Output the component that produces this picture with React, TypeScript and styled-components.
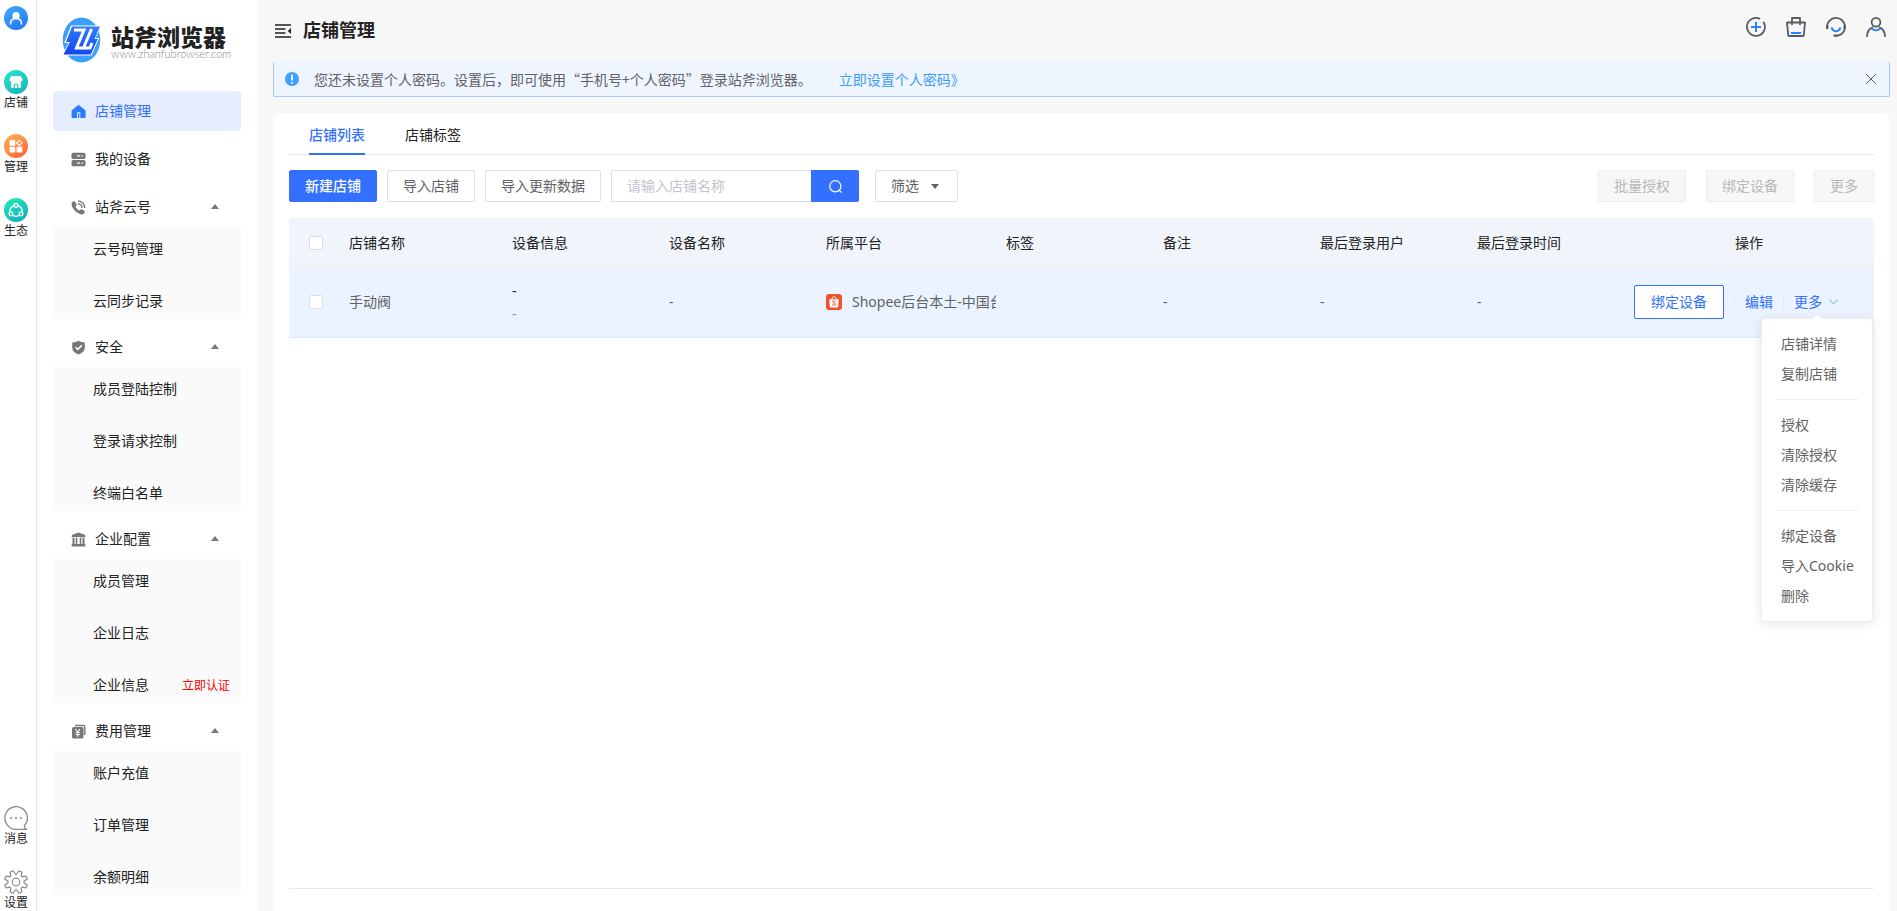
import React from "react";
import styled, { createGlobalStyle, css } from "styled-components";

const GlobalStyle = createGlobalStyle`
  *, *::before, *::after { box-sizing: border-box; }
  body {
    margin: 0;
    background: #f7f7f7;
    color: #222;
    font-family: "Noto Sans", "Noto Sans CJK SC", sans-serif;
    font-size: 14px;
    line-height: 20px;
  }
  button, input { font: inherit; color: inherit; }
  button { padding: 0; border: 0; background: none; cursor: pointer; white-space: nowrap; }
  a { color: inherit; text-decoration: none; }
  ul { list-style: none; margin: 0; padding: 0; }
  h1, p { margin: 0; }
  svg { display: block; flex: none; }
`;

const Shell = styled.div`
  display: flex;
  min-height: 100vh;
`;

/* ---------- Rail ---------- */
const Rail = styled.nav`
  flex: none;
  display: flex;
  flex-direction: column;
  justify-content: space-between;
  width: 37px;
  padding: 6px 4px 0;
  background: #fff;
  border-right: 1px solid #e2e2e2;
`;

const RailGroup = styled.div`
  display: flex;
  flex-direction: column;
`;

const RailItem = styled.a<{ $last?: boolean }>`
  display: flex;
  flex-direction: column;
  width: 24px;
  height: ${(p) => (p.$last ? "41px" : "64px")};
  font-size: 12px;
  line-height: 18px;
  white-space: nowrap;
`;

/* ---------- Sidebar ---------- */
const Sidebar = styled.aside`
  flex: none;
  width: 220px;
  padding: 16px 16px 0;
  background: #fff;
`;

const Brand = styled.a`
  display: flex;
  align-items: center;
  gap: 10px;
  height: 47px;
  margin-bottom: 28px;
  padding-left: 9px;
`;

const BrandText = styled.span`
  display: flex;
  flex-direction: column;
  padding-top: 4px;
`;

const BrandName = styled.span`
  font-family: "Noto Sans CJK SC", sans-serif;
  font-size: 23px;
  font-weight: 900;
  line-height: 24px;
  color: #222;
  white-space: nowrap;
`;

const BrandUrl = styled.span`
  font-family: Lato, sans-serif;
  font-size: 11px;
  font-weight: 300;
  line-height: 12px;
  color: #8a8a8a;
`;

const Menu = styled.ul`
  display: flex;
  flex-direction: column;
  gap: 8px;
`;

const MenuLink = styled.a<{ $active?: boolean }>`
  display: flex;
  align-items: center;
  gap: 9px;
  height: 40px;
  padding: 0 22px 0 18px;
  border-radius: 4px;
  color: #777;
  ${(p) =>
    p.$active &&
    css`
      color: #2b7cfd;
      background: #e6edff;
    `}
`;

const MenuLabel = styled.span<{ $active?: boolean }>`
  flex: 1;
  color: ${(p) => (p.$active ? "#3370ff" : "#222")};
`;

const CaretUp = styled.span`
  width: 0;
  height: 0;
  margin-bottom: 2px;
  border: 4px solid transparent;
  border-top: 0;
  border-bottom: 5px solid #777;
`;

const SubMenu = styled.ul`
  display: flex;
  flex-direction: column;
  gap: 16px;
  padding-top: 4px;
  background: #fafafa;
`;

const SubLink = styled.a`
  display: flex;
  align-items: center;
  justify-content: space-between;
  height: 36px;
  padding: 0 11px 0 40px;
`;

const Tag = styled.span`
  padding-top: 2px;
  font-size: 12px;
  line-height: 18px;
  color: #f00;
`;

/* ---------- Main ---------- */
const Main = styled.main`
  flex: 1;
  min-width: 0;
  display: flex;
  flex-direction: column;
  padding: 0 7px 0 16px;
`;

const TopBar = styled.header`
  display: flex;
  align-items: center;
  gap: 12px;
  height: 62px;
  padding-left: 2px;
`;

const Title = styled.h1`
  flex: 1;
  padding-bottom: 2px;
  font-size: 18px;
  font-weight: 700;
  line-height: 26px;
`;

const TopActions = styled.div`
  display: flex;
  gap: 20px;
  margin: 0 4px 8px 0;
`;

const Notice = styled.div`
  display: flex;
  align-items: center;
  height: 35px;
  padding: 0 13px 0 11px;
  font-family: "Noto Sans CJK SC", sans-serif;
  color: #606266;
  background: #eef5ff;
  border: 1px solid #a6c8ff;
  border-top: 0;
  border-radius: 0 0 2px 2px;
`;

const NoticeText = styled.p`
  margin-left: 15px;
`;

const NoticeLink = styled.a`
  margin: 0 auto 0 27px;
  color: #3d9bfd;
`;

const Card = styled.section`
  flex: 1;
  display: flex;
  flex-direction: column;
  margin-top: 16px;
  padding: 0 16px;
  background: #fff;
  border-radius: 8px 8px 0 0;
`;

const Tabs = styled.div`
  display: flex;
  gap: 40px;
  padding-left: 20px;
  border-bottom: 1px solid #e4e7ed;
`;

const Tab = styled.button<{ $active?: boolean }>`
  height: 42px;
  margin-bottom: -1px;
  padding-top: 4px;
  border-bottom: 2px solid transparent;
  ${(p) =>
    p.$active &&
    css`
      color: #3370ff;
      font-weight: 500;
      border-color: #3370ff;
    `}
`;

const Toolbar = styled.div`
  display: flex;
  gap: 10px;
  margin: 15px 0 16px;
`;

const Button = styled.button<{ $primary?: boolean }>`
  height: 32px;
  padding: 0 15px;
  color: #606266;
  background: #fff;
  border: 1px solid #dcdfe6;
  border-radius: 2px;
  &:disabled {
    color: #b8b8b8;
    background: #f7f7f7;
    border-color: #ebeef5;
  }
  ${(p) =>
    p.$primary &&
    css`
      color: #fff;
      font-weight: 500;
      background: #3370ff;
      border-color: #3370ff;
    `}
`;

const Search = styled.form`
  display: flex;
  margin-right: 6px;
`;

const SearchInput = styled.input`
  width: 200px;
  height: 32px;
  padding: 0 15px 2px;
  background: #fff;
  border: 1px solid #dcdfe6;
  border-right: 0;
  border-radius: 2px 0 0 2px;
  outline: 0;
  &::placeholder { color: #c0c4cc; opacity: 1; }
`;

const SearchButton = styled.button`
  display: flex;
  align-items: center;
  justify-content: center;
  width: 48px;
  height: 32px;
  background: #3370ff;
  border-radius: 0 2px 2px 0;
`;

const FilterButton = styled(Button)`
  display: flex;
  align-items: center;
  gap: 12px;
  padding-right: 18px;
`;

const CaretDown = styled.span`
  border: 4px solid transparent;
  border-top: 5px solid #606266;
  border-bottom: 0;
`;

const BulkActions = styled.div`
  display: flex;
  gap: 20px;
  margin-left: auto;
`;

const Table = styled.table`
  width: 100%;
  table-layout: fixed;
  border-collapse: separate;
  border-spacing: 0;
`;

const Col = styled.col<{ $w?: number }>`
  width: ${(p) => (p.$w ? `${p.$w}px` : "auto")};
`;

const Th = styled.th<{ $center?: boolean }>`
  height: 49px;
  padding: 2px 10px 0;
  font-weight: 400;
  text-align: ${(p) => (p.$center ? "center" : "left")};
  background: #f1f5fb;
  border-bottom: 1px solid #ebeef5;
  &:first-child { padding-left: 20px; }
`;

const Td = styled.td`
  height: 71px;
  padding: 0 0 0 10px;
  color: #606266;
  background: #eaf3ff;
  border-bottom: 1px solid #e4eaf5;
  &:first-child { padding-left: 20px; }
`;

const Checkbox = styled.input`
  appearance: none;
  display: block;
  width: 14px;
  height: 14px;
  margin: 0;
  background: #fff;
  border: 1px solid #dcdfe6;
  border-radius: 2px;
`;

const DeviceLine = styled.div<{ $dark?: boolean }>`
  line-height: 23px;
  color: ${(p) => (p.$dark ? "#222" : "#8b8f96")};
`;

const Platform = styled.div`
  display: flex;
  gap: 10px;
  align-items: center;
  overflow: hidden;
  white-space: nowrap;
`;

const RowActions = styled.div`
  display: flex;
  align-items: center;
`;

const OutlineButton = styled.button`
  height: 34px;
  margin-right: 10px;
  padding: 0 16px;
  color: #3370ff;
  background: #fff;
  border: 1px solid #3370ff;
  border-radius: 2px;
`;

const TextAction = styled.button`
  display: flex;
  align-items: center;
  gap: 7px;
  height: 20px;
  padding: 0 10px;
  color: #3370ff;
`;

const Rule = styled.span`
  width: 1px;
  height: 14px;
  background: #e2eaf8;
`;

const MoreWrap = styled.div`
  position: relative;
`;

const Dropdown = styled.ul`
  position: absolute;
  z-index: 2;
  top: 26px;
  right: -25px;
  width: 112px;
  padding: 10px 0;
  color: #606266;
  background: #fff;
  border: 1px solid #ebeef5;
  border-radius: 4px;
  box-shadow: 0 2px 12px rgba(0, 0, 0, 0.1);
  &::before {
    content: "";
    position: absolute;
    top: -5px;
    left: 50px;
    border: 5px solid transparent;
    border-top: 0;
    border-bottom-color: #fff;
  }
`;

const DropItem = styled.button`
  display: block;
  width: 100%;
  height: 30px;
  padding: 0 19px;
  text-align: left;
`;

const DropDivider = styled.li`
  height: 1px;
  margin: 10px 14px;
  background: #ebeef5;
`;

const CardFoot = styled.footer`
  height: 23px;
  margin-top: auto;
  border-top: 1px solid #e6eaf5;
`;

/* ---------- Icons ---------- */
type Glyph = "user" | "shop" | "grid" | "eco";

const discs: Record<Glyph, [string, string]> = {
  user: ["#42a6fb", "#2376f6"],
  shop: ["#25e3c4", "#17b5bd"],
  grid: ["#ffb055", "#ff6435"],
  eco: ["#22e8b5", "#14aebb"],
};

const Disc = ({ kind }: { kind: Glyph }) => (
  <svg width="24" height="24" viewBox="0 0 24 24" fill="none" aria-hidden="true">
    <defs>
      <linearGradient id={`disc-${kind}`} x1="0.2" y1="0" x2="0.8" y2="1">
        <stop stopColor={discs[kind][0]} />
        <stop offset="1" stopColor={discs[kind][1]} />
      </linearGradient>
    </defs>
    <circle cx="12" cy="12" r="12" fill={`url(#disc-${kind})`} />
    {kind === "user" && (
      <g stroke="#fff" strokeWidth="1.5" strokeLinecap="round">
        <circle cx="12" cy="9.7" r="3.6" fill="#fff" stroke="none" />
        <path d="M6.5 18c0-3.4 2.3-5.4 5.5-5.4s5.500 2 5.500 5.400" />
      </g>
    )}
    {kind === "shop" && (
      <g>
        <path d="M7.200 6h9.600l1.700 3.500c.3 1.500-1 2.500-2.200 2-.9.8-2.100.8-2.900 0-.8.700-2 .7-2.800 0-.9.800-2 .8-2.900 0-1.300.5-2.500-.5-2.200-2z" fill="#fff" />
        <path d="M7.200 11.500h9.600V17c0 .7-.4 1-1 1H8.200c-.6 0-1-.3-1-1z" fill="#fff" />
        <path d="M10.200 18v-2.200a1.800 1.800 0 0 1 3.600 0V18" stroke="#20c6b9" strokeWidth="1.200" />
      </g>
    )}
    {kind === "grid" && (
      <g fill="#fff">
        <rect x="5.500" y="6" width="5.800" height="5.800" rx="1" />
        <rect x="5.500" y="12.700" width="5.800" height="5.800" rx="1" />
        <rect x="12.500" y="12.700" width="5.800" height="5.800" rx="1" />
        <path d="M15.400 6.200 18 8.900l-2.600 2.700-2.700-2.700z" stroke="#fff" strokeWidth="1.200" fill="none" />
      </g>
    )}
    {kind === "eco" && (
      <g stroke="#fff" strokeWidth="1.300" strokeLinecap="round">
        <circle cx="12" cy="7.200" r="1.900" />
        <circle cx="7" cy="15.800" r="1.900" />
        <circle cx="17" cy="15.800" r="1.900" />
        <path d="M9.500 7.800C7 9 5.700 11 5.800 13.300M14.500 7.800c2.500 1.200 3.800 3.200 3.700 5.500M9.400 17.700c1.700.8 3.500.8 5.200 0" />
      </g>
    )}
  </svg>
);

const MessageIcon = () => (
  <svg width="24" height="24" viewBox="0 0 24 24" fill="none" stroke="#8a8a8a" strokeWidth="1.300" aria-hidden="true">
    <path d="M20.300 19.800A11.300 11.300 0 1 0 12 23.300h10.500c-1.200-.8-2-2-2.200-3.500z" strokeLinejoin="round" />
    <g fill="#8a8a8a" stroke="none">
      <circle cx="7" cy="12" r="1" />
      <circle cx="12" cy="12" r="1" />
      <circle cx="17" cy="12" r="1" />
    </g>
  </svg>
);

const gearPath = (() => {
  const points: string[] = [];
  for (let i = 0; i < 8; i++) {
    const base = (i * Math.PI) / 4 + Math.PI / 8;
    const spots: [number, number][] = [[-0.3, 8], [-0.14, 11.6], [0.14, 11.6], [0.3, 8]];
    spots.forEach(([turn, radius]) => {
      const x = 12 + radius * Math.cos(base + turn);
      const y = 12 + radius * Math.sin(base + turn);
      points.push(`${x.toFixed(2)} ${y.toFixed(2)}`);
    });
  }
  return `M${points.join("L")}Z`;
})();

const GearIcon = () => (
  <svg width="24" height="24" viewBox="0 0 24 24" fill="none" stroke="#8a8a8a" strokeWidth="1.200" strokeLinejoin="round" aria-hidden="true">
    <path d={gearPath} />
    <circle cx="12" cy="12" r="3.800" />
  </svg>
);

const LogoMark = () => (
  <svg width="39" height="46" viewBox="0 0 39 46" aria-hidden="true">
    <defs>
      <linearGradient id="logo-bolt" x1="0.600" y1="0" x2="0.400" y2="1">
        <stop stopColor="#2f7cff" />
        <stop offset="1" stopColor="#1647f0" />
      </linearGradient>
    </defs>
    <ellipse cx="19.500" cy="23" rx="18.800" ry="22.500" fill="#3ba0fb" />
    <path d="M9 8.500h30.500L33.500 21h3.700l-7.700 17.500H0L6.500 26H2.200z" fill="#fff" />
    <path d="M10 9.500h28L32.500 22h3.300l-7 15.500H1.500L8 25H4z" fill="url(#logo-bolt)" />
    <path d="M12 13h10L14.500 31h6.500" fill="none" stroke="#fff" strokeWidth="3" />
    <path d="M29.500 12 21.500 31H28l2-5" fill="none" stroke="#fff" strokeWidth="3" />
  </svg>
);

type MenuIconName = "home" | "device" | "phone" | "shield" | "bank" | "fee";

const MenuIcon = ({ name }: { name: MenuIconName }) => (
  <svg width="15" height="15" viewBox="0 0 15 15" fill="currentColor" aria-hidden="true">
    {name === "home" && (
      <path fillRule="evenodd" d="M7.500.7 14 6c.4.300.6.700.6 1.200V13c0 .6-.4 1-1 1H9.300V8.300H6V14H1.600c-.6 0-1-.4-1-1V7.200c0-.5.2-.9.6-1.200zM7 9.300h1.300V14H7z" />
    )}
    {name === "device" && (
      <>
        <rect x="0.500" y="0.700" width="14" height="6.200" rx="1.600" />
        <rect x="0.500" y="8.100" width="14" height="6.200" rx="1.600" />
        <path d="M6 3.800h3M10.500 3.800h1.500M6 11.200h3M10.500 11.200h1.500" stroke="#fff" strokeWidth="1.200" />
      </>
    )}
    {name === "phone" && (
      <>
        <path d="M1 2.500C2 1 3.200.8 4 1.800l1.400 2c.5.800.3 1.400-.6 2.200-.4.400-.3.800 0 1.300.7 1.200 1.600 2.200 2.800 2.900.5.300.9.300 1.300-.1.700-.9 1.400-1.100 2.200-.6l2 1.300c1 .8.900 1.900-.3 2.900-1.300 1-3 1-5.500-.4C4.500 11.700 2.500 9.500 1.300 6.900.5 5.200.4 3.700 1 2.500z" />
        <path d="M7 3.700a4.200 4.200 0 0 1 4 4.200M7.200 1A7 7 0 0 1 13.800 8" fill="none" stroke="currentColor" strokeWidth="1.400" />
      </>
    )}
    {name === "shield" && (
      <>
        <path d="M7.500.8c2 1.100 4 1.600 6.300 1.600v5c0 3.300-2.300 5.600-6.300 7-4-1.400-6.300-3.700-6.300-7v-5C3.500 2.400 5.500 1.900 7.500.8z" />
        <path d="m4.500 7.200 2.300 2.200 4-4" fill="none" stroke="#fff" strokeWidth="1.500" />
      </>
    )}
    {name === "bank" && (
      <>
        <path d="m7.500.5 5.500 2c1 .4 1.300.8 1.300 1.500v1H.7V4c0-.7.3-1.100 1.300-1.500z" />
        <path d="M1.500 5.500h2V12h-2zM4.700 5.500h1.600V12H4.700zM8.700 5.500h1.600V12H8.700zM11.500 5.500h2V12h-2z" />
        <path d="M.7 12h13.600v2.500H.7z" />
      </>
    )}
    {name === "fee" && (
      <>
        <path d="M4 1.500h8.500c.9 0 1.300.4 1.300 1.300V11" fill="none" stroke="currentColor" strokeWidth="1.400" />
        <rect x="1" y="3" width="11.500" height="11.500" rx="1.500" />
        <path d="m4.500 5 2.200 3 2.300-3M4.500 8.500H9M4.500 10.500H9M6.700 8v4.700" fill="none" stroke="#fff" strokeWidth="1.100" />
      </>
    )}
  </svg>
);

const FoldIcon = () => (
  <svg width="16" height="14" viewBox="0 0 16 14" aria-hidden="true">
    <path d="M0 1h16M0 5h10.500M0 9h10.500M0 13h16" stroke="#222" strokeWidth="1.500" />
    <path d="M16 4v6l-3.300-3z" fill="#222" />
  </svg>
);

const TopIcon = ({ name }: { name: "add" | "bag" | "service" | "account" }) => (
  <svg width="20" height="20" viewBox="0 0 20 20" fill="none" stroke="#5a5c60" strokeWidth="1.800" aria-hidden="true">
    {name === "add" && (
      <>
        <path d="M14 1.900a9 9 0 1 0 3.300 2.900" />
        <path d="M10 5v10M5 10h10" stroke="#2b82fd" strokeWidth="2" />
      </>
    )}
    {name === "bag" && (
      <>
        <path d="M1 5.500h18l-1.200 12.700c0 .5-.3.800-.8.800H3c-.5 0-.8-.3-.8-.8zM6 8V1h8v7" strokeLinejoin="round" />
        <path d="M5 16h10" stroke="#2b82fd" strokeWidth="2" />
      </>
    )}
    {name === "service" && (
      <>
        <path d="M1.200 12A9 9 0 1 1 17.600 14.700c-1.700 2.600-4.200 3.900-7.600 4.100" />
        <path d="M1.300 8v4M18.500 8.500v3.500M7.500 18.700h4" strokeWidth="2.200" />
        <path d="M5.500 10.500c1.800 5 7.200 5 9 0" stroke="#2b82fd" strokeWidth="2.200" />
      </>
    )}
    {name === "account" && (
      <>
        <circle cx="10" cy="5.300" r="4.400" />
        <path d="M1 20c0-5.500 2.600-8.800 6-9.700M19 20c0-5.500-2.600-8.800-6-9.700" />
        <path d="M5.500 11.500c2.800 2.200 6.200 2.200 9 0" stroke="#2b82fd" />
      </>
    )}
  </svg>
);

const InfoIcon = () => (
  <svg width="14" height="14" viewBox="0 0 14 14" aria-hidden="true">
    <circle cx="7" cy="7" r="7" fill="#409eff" />
    <path d="M7 2.500v6M7 10v1.800" stroke="#fff" strokeWidth="1.700" />
  </svg>
);

const CloseIcon = () => (
  <svg width="10" height="10" viewBox="0 0 10 10" stroke="#606266" strokeWidth="1" aria-hidden="true">
    <path d="m0 0 10 10M10 0 0 10" />
  </svg>
);

const SearchIcon = () => (
  <svg width="13" height="13" viewBox="0 0 13 13" fill="none" stroke="#fff" strokeWidth="1.200" aria-hidden="true">
    <circle cx="6.300" cy="6.300" r="5.600" />
    <path d="m10.300 10.300 2.300 2.300" />
  </svg>
);

const ChevronIcon = () => (
  <svg width="9" height="6" viewBox="0 0 9 6" fill="none" stroke="#6a9aff" strokeWidth="1" aria-hidden="true">
    <path d="m.5.800 4 4 4-4" />
  </svg>
);

const ShopeeIcon = () => (
  <svg width="16" height="16" viewBox="0 0 16 16" fill="none" aria-hidden="true">
    <rect width="16" height="16" rx="3" fill="#f1502f" />
    <path d="M3.300 5.200h9.400l-.5 7.600c0 .5-.3.700-.8.700H4.600c-.5 0-.8-.2-.8-.7z" fill="#fff" />
    <path d="M6 5.200c0-3.400 4-3.400 4 0" stroke="#fff" />
    <path d="M9.600 7.300c-1.500-1-3.300-.5-3.100.6.200 1.200 3.200.8 3.200 2.300 0 1.300-2 1.500-3.500.4" stroke="#f1502f" />
  </svg>
);

/* ---------- Data ---------- */
type SubEntry = { label: string; tag?: string };
type MenuEntry = { label: string; icon: MenuIconName; active?: boolean; children?: SubEntry[] };

const menu: MenuEntry[] = [
  { label: "店铺管理", icon: "home", active: true },
  { label: "我的设备", icon: "device" },
  { label: "站斧云号", icon: "phone", children: [{ label: "云号码管理" }, { label: "云同步记录" }] },
  { label: "安全", icon: "shield", children: [{ label: "成员登陆控制" }, { label: "登录请求控制" }, { label: "终端白名单" }] },
  { label: "企业配置", icon: "bank", children: [{ label: "成员管理" }, { label: "企业日志" }, { label: "企业信息", tag: "立即认证" }] },
  { label: "费用管理", icon: "fee", children: [{ label: "账户充值" }, { label: "订单管理" }, { label: "余额明细" }] },
];

const columns = ["店铺名称", "设备信息", "设备名称", "所属平台", "标签", "备注", "最后登录用户", "最后登录时间"];

const dropdownGroups = [
  ["店铺详情", "复制店铺"],
  ["授权", "清除授权", "清除缓存"],
  ["绑定设备", "导入Cookie", "删除"],
];

export default function App() {
  return (
    <>
      <GlobalStyle />
      <Shell>
        <Rail aria-label="应用">
          <RailGroup>
            <RailItem href="#user" aria-label="用户"><Disc kind="user" /></RailItem>
            <RailItem href="#shop"><Disc kind="shop" />店铺</RailItem>
            <RailItem href="#manage"><Disc kind="grid" />管理</RailItem>
            <RailItem href="#eco"><Disc kind="eco" />生态</RailItem>
          </RailGroup>
          <RailGroup>
            <RailItem href="#message"><MessageIcon />消息</RailItem>
            <RailItem href="#settings" $last><GearIcon />设置</RailItem>
          </RailGroup>
        </Rail>

        <Sidebar>
          <Brand href="#home">
            <LogoMark />
            <BrandText>
              <BrandName>站斧浏览器</BrandName>
              <BrandUrl>www.zhanfubrowser.com</BrandUrl>
            </BrandText>
          </Brand>
          <Menu>
            {menu.map((entry) => (
              <li key={entry.label}>
                <MenuLink href="#menu" $active={entry.active}>
                  <MenuIcon name={entry.icon} />
                  <MenuLabel $active={entry.active}>{entry.label}</MenuLabel>
                  {entry.children && <CaretUp />}
                </MenuLink>
                {entry.children && (
                  <SubMenu>
                    {entry.children.map((sub) => (
                      <li key={sub.label}>
                        <SubLink href="#sub">
                          {sub.label}
                          {sub.tag && <Tag>{sub.tag}</Tag>}
                        </SubLink>
                      </li>
                    ))}
                  </SubMenu>
                )}
              </li>
            ))}
          </Menu>
        </Sidebar>

        <Main>
          <TopBar>
            <button type="button" aria-label="收起菜单"><FoldIcon /></button>
            <Title>店铺管理</Title>
            <TopActions>
              <button type="button" aria-label="新增"><TopIcon name="add" /></button>
              <button type="button" aria-label="商城"><TopIcon name="bag" /></button>
              <button type="button" aria-label="客服"><TopIcon name="service" /></button>
              <button type="button" aria-label="账户"><TopIcon name="account" /></button>
            </TopActions>
          </TopBar>

          <Notice role="status">
            <InfoIcon />
            <NoticeText>您还未设置个人密码。设置后，即可使用“手机号+个人密码”登录站斧浏览器。</NoticeText>
            <NoticeLink href="#password">立即设置个人密码》</NoticeLink>
            <button type="button" aria-label="关闭"><CloseIcon /></button>
          </Notice>

          <Card>
            <Tabs role="tablist">
              <Tab type="button" role="tab" aria-selected="true" $active>店铺列表</Tab>
              <Tab type="button" role="tab" aria-selected="false">店铺标签</Tab>
            </Tabs>

            <Toolbar>
              <Button type="button" $primary>新建店铺</Button>
              <Button type="button">导入店铺</Button>
              <Button type="button">导入更新数据</Button>
              <Search onSubmit={(event) => event.preventDefault()}>
                <SearchInput type="text" placeholder="请输入店铺名称" aria-label="店铺名称" />
                <SearchButton type="submit" aria-label="搜索"><SearchIcon /></SearchButton>
              </Search>
              <FilterButton type="button">筛选<CaretDown /></FilterButton>
              <BulkActions>
                <Button type="button" disabled>批量授权</Button>
                <Button type="button" disabled>绑定设备</Button>
                <Button type="button" disabled>更多</Button>
              </BulkActions>
            </Toolbar>

            <Table>
              <colgroup>
                <Col $w={50} />
                <Col $w={163} />
                <Col />
                <Col />
                <Col $w={180} />
                <Col />
                <Col />
                <Col />
                <Col />
                <Col $w={250} />
              </colgroup>
              <thead>
                <tr>
                  <Th><Checkbox type="checkbox" aria-label="全选" /></Th>
                  {columns.map((name) => <Th key={name}>{name}</Th>)}
                  <Th $center>操作</Th>
                </tr>
              </thead>
              <tbody>
                <tr>
                  <Td><Checkbox type="checkbox" aria-label="选择手动阀" /></Td>
                  <Td>手动阀</Td>
                  <Td>
                    <DeviceLine $dark>-</DeviceLine>
                    <DeviceLine>-</DeviceLine>
                  </Td>
                  <Td>-</Td>
                  <Td><Platform><ShopeeIcon />Shopee后台本土-中国台湾</Platform></Td>
                  <Td />
                  <Td>-</Td>
                  <Td>-</Td>
                  <Td>-</Td>
                  <Td>
                    <RowActions>
                      <OutlineButton type="button">绑定设备</OutlineButton>
                      <Rule />
                      <TextAction type="button">编辑</TextAction>
                      <Rule />
                      <MoreWrap>
                        <TextAction type="button" aria-expanded="true">更多<ChevronIcon /></TextAction>
                        <Dropdown>
                          {dropdownGroups.map((group, index) => (
                            <React.Fragment key={group[0]}>
                              {index > 0 && <DropDivider role="separator" />}
                              {group.map((label) => (
                                <li key={label}><DropItem type="button">{label}</DropItem></li>
                              ))}
                            </React.Fragment>
                          ))}
                        </Dropdown>
                      </MoreWrap>
                    </RowActions>
                  </Td>
                </tr>
              </tbody>
            </Table>
            <CardFoot />
          </Card>
        </Main>
      </Shell>
    </>
  );
}
